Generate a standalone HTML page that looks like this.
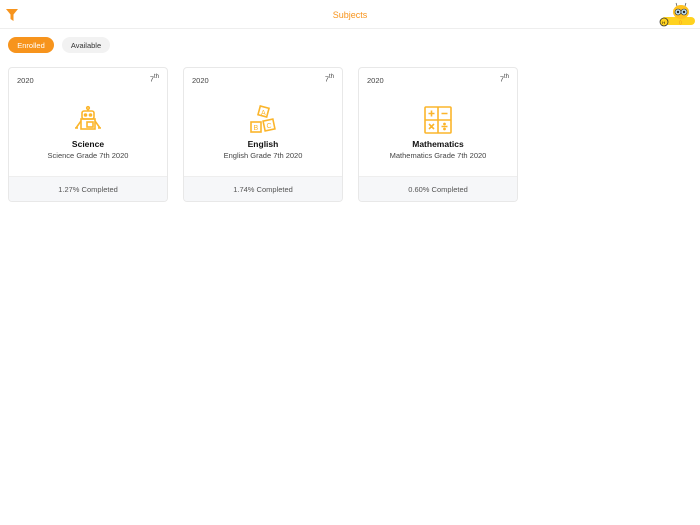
<!DOCTYPE html>
<html><head><style>
*{margin:0;padding:0;box-sizing:border-box}
body{width:700px;height:525px;background:#fff;font-family:"Liberation Sans",sans-serif;position:relative;overflow:hidden}
.hdr{position:absolute;left:0;top:0;width:700px;height:29px;border-bottom:1px solid #eee}
.title{position:absolute;left:0;width:700px;top:10px;text-align:center;color:#f7941d;font-size:9px}
.btn{position:absolute;top:37px;height:16px;border-radius:8px;font-size:7.5px;line-height:17px;text-align:center}
.card{position:absolute;top:67px;width:160px;height:135px;border:1px solid #e8e8e8;border-radius:4px;overflow:hidden;background:#fff}
.yr{position:absolute;left:8px;top:8px;font-size:7.5px;color:#444}
.gr{position:absolute;right:8px;top:6px;font-size:7.5px;color:#444}
.gr sup{font-size:6px}
.ic{position:absolute;left:64px;top:37px;width:30px;height:30px}
.nm{position:absolute;left:0;width:100%;top:71px;text-align:center;font-weight:bold;font-size:8.5px;color:#111}
.sb{position:absolute;left:0;width:100%;top:83px;text-align:center;font-size:7.5px;color:#444}
.ft{position:absolute;left:0;bottom:0;width:100%;height:25px;background:#f6f7f9;border-top:1px solid #eee;text-align:center;line-height:25px;font-size:7.5px;color:#555}
</style></head><body>
<div class="hdr">
<svg style="position:absolute;left:6px;top:9px" width="12" height="12" viewBox="0 0 12 12"><path d="M0 0H12L7.5 5.5V12L4.5 10V5.5Z" fill="#f7941d"/></svg>
<div class="title">Subjects</div>
<svg style="position:absolute;left:657px;top:2px" width="40" height="26" viewBox="0 0 40 26">
<rect x="4" y="15" width="34" height="8" rx="4" fill="#ffd21f"/>
<circle cx="7" cy="20" r="4" fill="#ffd21f" stroke="#333" stroke-width="0.8"/>
<text x="5.3" y="22" font-size="4" font-family="Liberation Sans">H</text>
<text x="22" y="22.5" font-size="5" fill="#f7941d" font-family="Liberation Sans">0</text>
<ellipse cx="24" cy="10" rx="8" ry="7" fill="#ffc21f"/>
<circle cx="21" cy="10" r="3" fill="#bde" stroke="#333" stroke-width="0.6"/>
<circle cx="27" cy="10" r="3" fill="#bde" stroke="#333" stroke-width="0.6"/>
<circle cx="21" cy="10" r="1.2" fill="#222"/><circle cx="27" cy="10" r="1.2" fill="#222"/>
<path d="M20 4L19 1M28 4L29 1" stroke="#333" stroke-width="0.6"/>
</svg>
</div>
<div class="btn" style="left:8px;width:46px;background:#f7941d;color:#fff">Enrolled</div>
<div class="btn" style="left:62px;width:48px;background:#f2f2f2;color:#333">Available</div>

<div class="card" style="left:8px">
<div class="yr">2020</div><div class="gr">7<sup>th</sup></div>
<svg class="ic" viewBox="0 0 30 30" fill="none" stroke="#fbb52b" stroke-width="1.6">
<circle cx="15" cy="3" r="1.3"/><path d="M15 4.3V6"/>
<rect x="9" y="6" width="12" height="8" rx="2"/>
<circle cx="12.5" cy="10" r="1" fill="#fbb52b"/><circle cx="17.5" cy="10" r="1" fill="#fbb52b"/>
<rect x="8" y="14" width="14" height="10"/><rect x="14" y="17" width="6" height="5"/>
<path d="M8 16L3 23M22 16L27 23M2 23H5M25 23H28"/></svg>
<div class="nm">Science</div><div class="sb">Science Grade 7th 2020</div>
<div class="ft">1.27% Completed</div></div>

<div class="card" style="left:183px">
<div class="yr">2020</div><div class="gr">7<sup>th</sup></div>
<svg class="ic" viewBox="0 0 30 30" fill="none" stroke="#fbb52b" stroke-width="1.6">
<rect x="11" y="2" width="9" height="9" transform="rotate(15 15.5 6.5)"/>
<rect x="3" y="17" width="10" height="10"/><rect x="16" y="15" width="10" height="10" transform="rotate(-12 21 20)"/>
<text x="13" y="10" font-size="7" fill="#fbb52b" stroke="none" font-family="Liberation Sans">A</text>
<text x="5.5" y="25" font-size="7" fill="#fbb52b" stroke="none" font-family="Liberation Sans">B</text>
<text x="18.5" y="23" font-size="7" fill="#fbb52b" stroke="none" font-family="Liberation Sans">C</text></svg>
<div class="nm">English</div><div class="sb">English Grade 7th 2020</div>
<div class="ft">1.74% Completed</div></div>

<div class="card" style="left:358px">
<div class="yr">2020</div><div class="gr">7<sup>th</sup></div>
<svg class="ic" viewBox="0 0 30 30" fill="none" stroke="#fbb52b" stroke-width="1.6">
<rect x="2" y="2" width="26" height="26" rx="1"/><path d="M15 2V28M2 15H28"/>
<path d="M8.5 5.5V11.5M5.5 8.5H11.5M18.5 8.5H24.5M6 19L11 24M11 19L6 24M18.5 21.5H24.5"/>
<circle cx="21.5" cy="19" r=".6" fill="#fbb52b"/><circle cx="21.5" cy="24" r=".6" fill="#fbb52b"/></svg>
<div class="nm">Mathematics</div><div class="sb">Mathematics Grade 7th 2020</div>
<div class="ft">0.60% Completed</div></div>
</body></html>
